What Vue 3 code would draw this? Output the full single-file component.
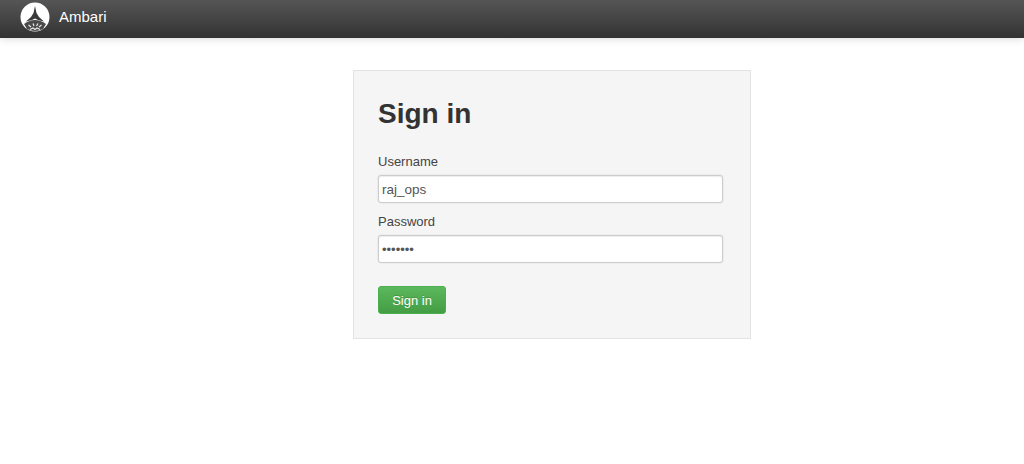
<template>
  <div class="page">
    <!-- top bar -->
    <header class="navbar">
      <svg class="logo" width="30" height="30" viewBox="0 0 30 30">
        <circle cx="15" cy="15" r="14.5" fill="#fff" />
        <path d="M15 4 L16.5 11 L19 15 L24 19.5 L18 18 L15 16.5 L12 18 L6 19.5 L11 15 L13.5 11 Z" fill="#3a3a3a" />
        <path d="M4 22 Q15 14 26 22 L23 27 Q15 31 7 27 Z" fill="#4a4a4a" />
        <path d="M8.5 23 L11 25 M13 21.5 L14 24 M18 21.5 L16.5 24 M21.5 23 L19 25 M10 27.5 L13 26 L15 27.5 L17 26 L20 27.5" stroke="#e8e8e8" stroke-width="1.2" fill="none" />
      </svg>
      <span class="brand">Ambari</span>
    </header>

    <main class="content">
      <form class="well" @submit.prevent>
        <h2>Sign in</h2>
        <label for="username">Username</label>
        <input id="username" v-model="username" type="text" />
        <label for="password">Password</label>
        <input id="password" v-model="password" type="password" />
        <button type="submit" class="btn">Sign in</button>
      </form>
    </main>
  </div>
</template>

<script setup>
import { ref } from "vue";

const username = ref("raj_ops");
const password = ref("1234567");
</script>

<style>
html,
body {
  margin: 0;
  background: #fff;
}
</style>

<style scoped>
.page {
  min-height: 464px;
  font-family: "Liberation Sans", Arial, sans-serif;
  font-size: 13px;
  line-height: 20px;
  color: #333;
}

.navbar {
  height: 38px;
  box-sizing: border-box;
  padding-left: 20px;
  display: flex;
  align-items: center;
  gap: 9px;
  background: linear-gradient(to bottom, #555, #333);
  box-shadow: 0 1px 8px rgba(0, 0, 0, 0.15);
}

.logo {
  display: block;
  margin-top: -4px;
}

.brand {
  color: #fff;
  font-size: 15px;
  margin-top: -5px;
}

.content {
  display: flex;
  justify-content: center;
  padding-top: 32px;
  padding-left: 80px;
}

.well {
  width: 398px;
  height: 269px;
  box-sizing: border-box;
  padding: 24px;
  background: #f5f5f5;
  border: 1px solid #e3e3e3;
  display: flex;
  flex-direction: column;
  align-items: flex-start;
}

h2 {
  margin: 2px 0 22px;
  font-size: 28px;
  line-height: 33px;
  font-weight: 700;
}

label {
  margin-bottom: 3px;
  color: #444;
}

input {
  width: 345px;
  height: 28px;
  box-sizing: border-box;
  margin-bottom: 9px;
  padding: 0 3px;
  font: 13.5px "Liberation Sans", Arial, sans-serif;
  color: #555;
  background: #fff;
  border: 1px solid #ccc;
  border-radius: 3px;
  box-shadow:
    inset 0 1px 1px rgba(0, 0, 0, 0.075),
    0 0 2px rgba(0, 0, 0, 0.12);
  outline: none;
}

input[type="password"] {
  font-size: 13px;
}

.btn {
  width: 68px;
  height: 28px;
  margin-top: 14px;
  padding: 0;
  font: 13px "Liberation Sans", Arial, sans-serif;
  color: #fff;
  background: linear-gradient(to bottom, #5cb85c, #449d44);
  border: 1px solid #4cae4c;
  border-radius: 3px;
  text-shadow: 0 -1px 0 rgba(0, 0, 0, 0.2);
}
</style>
